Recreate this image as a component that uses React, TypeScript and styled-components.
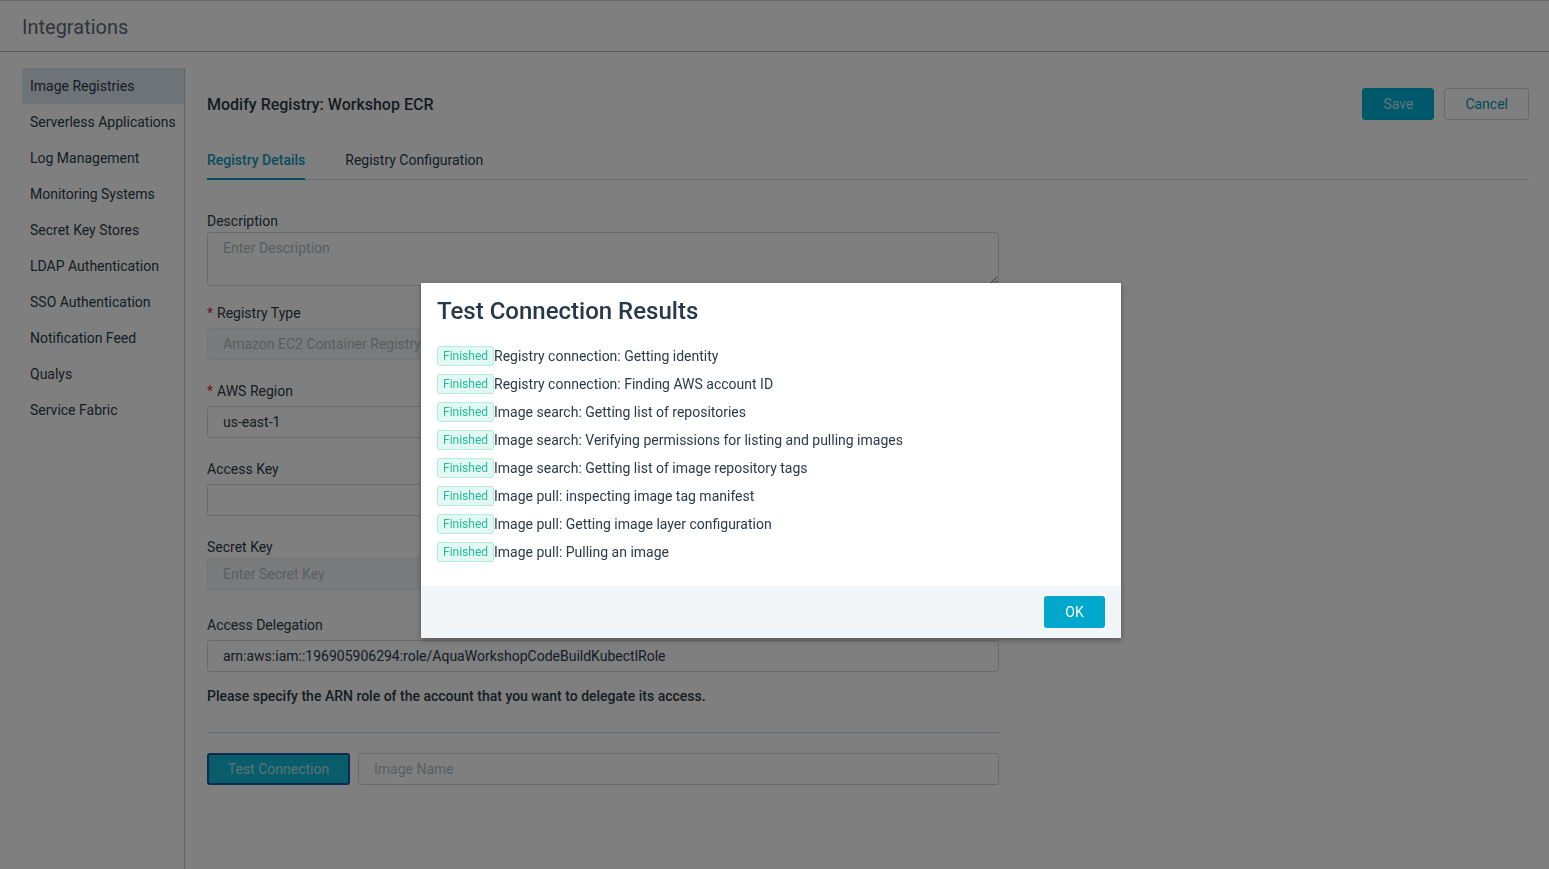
import React from "react";
import styled, { createGlobalStyle } from "styled-components";

const GlobalStyle = createGlobalStyle`
  html, body { margin: 0; padding: 0; background: #ffffff; }
  body { font-family: Roboto, "Noto Sans", "Liberation Sans", sans-serif; color: #2b3a48; }
  * { box-sizing: border-box; }
`;

const TEAL = "#00a8cc";
const TEXT = "#2b3a48";

const Page = styled.div`
  min-height: 100vh;
  display: flex;
  flex-direction: column;
  position: relative;
`;

const Header = styled.header`
  height: 52px;
  flex: 0 0 52px;
  display: flex;
  align-items: center;
  padding: 3px 0 0 22px;
  border-bottom: 1px solid #a9adb1;
  font-size: 20px;
  color: #5f6b76;
`;

const Body = styled.div`
  flex: 1;
  display: flex;
  padding: 16px 20px 0 22px;
`;

const Sidebar = styled.nav`
  width: 163px;
  flex: 0 0 163px;
  border-right: 1px solid #b9c6d3;
  display: flex;
  flex-direction: column;
`;

const NavItem = styled.div<{ $active?: boolean }>`
  height: 36px;
  display: flex;
  align-items: center;
  padding-left: 8px;
  font-size: 14px;
  color: ${TEXT};
  background: ${(p) => (p.$active ? "#dde6ee" : "transparent")};
  white-space: nowrap;
`;

const Main = styled.main`
  flex: 1;
  padding: 20px 0 0 22px;
  display: flex;
  flex-direction: column;
`;

const TitleRow = styled.div`
  height: 32px;
  display: flex;
  align-items: center;
  justify-content: space-between;
`;

const PageTitle = styled.h1`
  margin: 0;
  font-size: 16px;
  font-weight: 500;
  color: ${TEXT};
`;

const Actions = styled.div`
  display: flex;
  gap: 10px;
`;

const Button = styled.button<{ $variant?: "primary" | "outline" }>`
  height: 32px;
  padding: 0 20px;
  border-radius: 3px;
  font-family: inherit;
  font-size: 14px;
  cursor: pointer;
  border: 1px solid ${(p) => (p.$variant === "outline" ? "#cfd4d8" : TEAL)};
  background: ${(p) => (p.$variant === "outline" ? "#ffffff" : "#00b3d6")};
  color: ${(p) => (p.$variant === "outline" ? "#0096b8" : "rgba(255,255,255,0.75)")};
`;

const Tabs = styled.div`
  margin-top: 30px;
  display: flex;
  gap: 40px;
  border-bottom: 1px solid #d4d8e0;
`;

const Tab = styled.div<{ $active?: boolean }>`
  font-size: 14px;
  line-height: 20px;
  padding-bottom: 8px;
  margin-bottom: -1px;
  border-bottom: 2px solid ${(p) => (p.$active ? "#0a9cba" : "transparent")};
  color: ${(p) => (p.$active ? "#0a9cba" : TEXT)};
  font-weight: ${(p) => (p.$active ? 500 : 400)};
`;

const Form = styled.div`
  width: 792px;
  margin-top: 31px;
  display: flex;
  flex-direction: column;
`;

const Field = styled.div<{ $after?: number }>`
  display: flex;
  flex-direction: column;
  margin-bottom: ${(p) => p.$after ?? 21}px;
`;

const Label = styled.label<{ $gap?: number }>`
  font-size: 14px;
  line-height: 20px;
  color: ${TEXT};
  margin-bottom: ${(p) => p.$gap ?? 5}px;
`;

const Req = styled.span`
  color: #e0262b;
  margin-right: 4px;
`;

const Input = styled.input`
  height: 32px;
  width: 100%;
  border: 1px solid #d3d8dd;
  border-radius: 3px;
  padding: 0 15px;
  font-family: inherit;
  font-size: 14px;
  color: ${TEXT};
  background: #ffffff;
  outline: none;
  &::placeholder { color: #b4bcc4; }
  &:disabled { background: #f5f7f9; border-color: #e6e9ec; }
`;

const TextArea = styled.textarea`
  height: 54px;
  width: 100%;
  border: 1px solid #d3d8dd;
  border-radius: 3px;
  padding: 7px 15px;
  font-family: inherit;
  font-size: 14px;
  color: ${TEXT};
  resize: vertical;
  outline: none;
  &::placeholder { color: #b4bcc4; }
`;

const Help = styled.p`
  margin: 14px 0 0;
  font-size: 14px;
  line-height: 20px;
  font-weight: 500;
  color: ${TEXT};
`;

const Divider = styled.hr`
  margin: 26px 0 0;
  border: none;
  border-top: 1px solid #c5d3e2;
`;

const TestRow = styled.div`
  margin-top: 20px;
  display: flex;
  gap: 8px;
`;

const TestButton = styled.button`
  flex: 0 0 143px;
  height: 32px;
  border-radius: 3px;
  border: 2px solid #1b55a6;
  background: #12b8d4;
  color: rgba(210, 240, 246, 0.85);
  font-family: inherit;
  font-size: 14px;
`;

const Backdrop = styled.div`
  position: fixed;
  inset: 0;
  background: rgba(0, 0, 0, 0.5);
  border-top: 1px solid rgba(0, 0, 0, 0.2);
`;

const Modal = styled.div`
  position: absolute;
  left: 421px;
  top: 282px;
  width: 700px;
  background: #ffffff;
  box-shadow: 0 2px 6px rgba(0, 0, 0, 0.35);
  display: flex;
  flex-direction: column;
`;

const ModalBody = styled.div`
  padding: 13px 16px 20px;
`;

const ModalTitle = styled.h2`
  margin: 0 0 16px;
  font-size: 24px;
  line-height: 30px;
  font-weight: 500;
  color: #26384a;
`;

const ResultRow = styled.div`
  height: 28px;
  display: flex;
  align-items: center;
  font-size: 14px;
  color: ${TEXT};
`;

const Badge = styled.span`
  display: inline-flex;
  align-items: center;
  height: 20px;
  padding: 0 5px;
  border: 1px solid #b3ebdf;
  border-radius: 3px;
  background: #e3f8f3;
  color: #23bc9c;
  font-size: 12px;
`;

const ModalFooter = styled.div`
  height: 52px;
  background: #f3f6f9;
  display: flex;
  align-items: center;
  justify-content: flex-end;
  padding: 0 16px;
`;

const OkButton = styled.button`
  width: 61px;
  height: 32px;
  border: none;
  border-radius: 3px;
  background: ${TEAL};
  color: #ffffff;
  font-family: inherit;
  font-size: 14px;
`;

const navItems = [
  "Image Registries",
  "Serverless Applications",
  "Log Management",
  "Monitoring Systems",
  "Secret Key Stores",
  "LDAP Authentication",
  "SSO Authentication",
  "Notification Feed",
  "Qualys",
  "Service Fabric",
];

const results = [
  "Registry connection: Getting identity",
  "Registry connection: Finding AWS account ID",
  "Image search: Getting list of repositories",
  "Image search: Verifying permissions for listing and pulling images",
  "Image search: Getting list of image repository tags",
  "Image pull: inspecting image tag manifest",
  "Image pull: Getting image layer configuration",
  "Image pull: Pulling an image",
];

export default function App() {
  return (
    <>
      <GlobalStyle />
      <Page>
        <Header>Integrations</Header>
        <Body>
          <Sidebar>
            {navItems.map((n, i) => (
              <NavItem key={n} $active={i === 0}>
                {n}
              </NavItem>
            ))}
          </Sidebar>
          <Main>
            <TitleRow>
              <PageTitle>Modify Registry: Workshop ECR</PageTitle>
              <Actions>
                <Button>Save</Button>
                <Button $variant="outline">Cancel</Button>
              </Actions>
            </TitleRow>
            <Tabs>
              <Tab $active>Registry Details</Tab>
              <Tab>Registry Configuration</Tab>
            </Tabs>
            <Form>
              <Field $after={17}>
                <Label $gap={1}>Description</Label>
                <TextArea placeholder="Enter Description" />
              </Field>
              <Field>
                <Label>
                  <Req>*</Req>Registry Type
                </Label>
                <Input disabled placeholder="Amazon EC2 Container Registry" />
              </Field>
              <Field>
                <Label>
                  <Req>*</Req>AWS Region
                </Label>
                <Input defaultValue="us-east-1" />
              </Field>
              <Field>
                <Label>Access Key</Label>
                <Input />
              </Field>
              <Field $after={25}>
                <Label $gap={1}>Secret Key</Label>
                <Input disabled placeholder="Enter Secret Key" />
              </Field>
              <Field $after={0}>
                <Label>Access Delegation</Label>
                <Input defaultValue="arn:aws:iam::196905906294:role/AquaWorkshopCodeBuildKubectlRole" />
              </Field>
              <Help>Please specify the ARN role of the account that you want to delegate its access.</Help>
              <Divider />
              <TestRow>
                <TestButton>Test Connection</TestButton>
                <Input placeholder="Image Name" />
              </TestRow>
            </Form>
          </Main>
        </Body>
        <Backdrop>
          <Modal>
            <ModalBody>
              <ModalTitle>Test Connection Results</ModalTitle>
              {results.map((r) => (
                <ResultRow key={r}>
                  <Badge>Finished</Badge>
                  {r}
                </ResultRow>
              ))}
            </ModalBody>
            <ModalFooter>
              <OkButton>OK</OkButton>
            </ModalFooter>
          </Modal>
        </Backdrop>
      </Page>
    </>
  );
}
